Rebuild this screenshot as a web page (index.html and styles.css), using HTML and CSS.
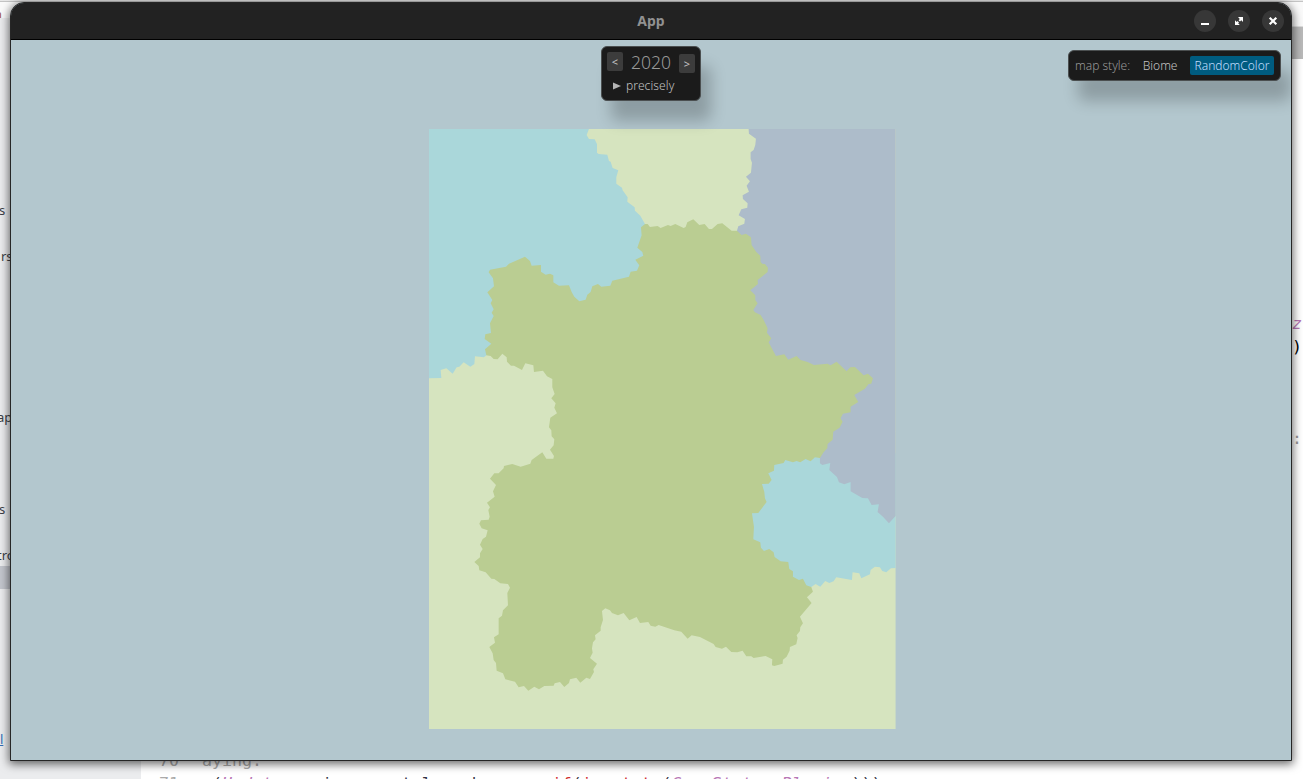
FILE: index.html
```html
<!DOCTYPE html>
<html lang="en">
<head>
<meta charset="utf-8">
<title>App</title>
<link rel="stylesheet" href="styles.css">
</head>
<body>
<div class="desktop">
  <div class="editor">
    <div class="editor-tabs"><span class="tab-label">n</span></div>
    <div class="editor-main">
      <ul class="tree">
        <li>s</li><li></li><li class="wide">rs</li><li></li><li></li><li></li><li></li><li></li><li></li>
        <li class="wide">ap</li><li></li><li></li><li></li><li>s</li><li></li><li class="wide">tro</li>
        <li class="selected"></li><li></li><li></li><li></li><li></li><li></li><li></li><li class="link">l</li>
      </ul>
      <div class="code-pane">
        <div class="code-header"></div>
        <div class="code-tail">
          <span class="type">z.</span><span>)</span><span></span><span></span><span></span><span class="muted">:</span>
        </div>
        <div class="code">
          <div class="line"><span class="num">70</span><code class="muted">aying:</code></div>
          <div class="line"><span class="num">71</span><code> (<i>Update</i>, uni::map_stels, ebon.<b>run_if</b>(<b>in_state</b>(<i>GameState</i>::<i>Playing</i>)))</code></div>
        </div>
      </div>
    </div>
  </div>

  <div class="window">
    <header class="titlebar">
      <span class="title">App</span>
      <div class="controls">
        <button class="control" aria-label="Minimize"><svg viewBox="0 0 22 22"><path d="M7 13h8v2H7z"/></svg></button>
        <button class="control" aria-label="Maximize"><svg viewBox="0 0 22 22"><path d="M10 7h5v5l-1.7-1.7-1.3 1.3-1.4-1.4 1.2-1.2zM7 10.2l1.7 1.7.8-.8 1.5 1.5-.8.8L11.800 15H7z"/></svg></button>
        <button class="control" aria-label="Close"><svg viewBox="0 0 22 22"><path class="cross" d="M7.7 7.7l6.6 6.6M14.3 7.7l-6.6 6.6"/></svg></button>
      </div>
    </header>
    <main class="stage">
      <svg class="map" viewBox="12 27 1400 1800" preserveAspectRatio="none">
        <rect class="plain" x="12" y="27" width="1400" height="1800"/>
        <path class="water" d="M12,27 492,27 485,45 492,57 509,58 516,72 516,98 521,102 547,104 552,123 557,125 563,144 580,151 574,172 574,191 591,203 593,211 608,232 607,245 629,262 630,272 646,287 660,312 660,600 220,700 184,706 177,712 150,709 148,732 136,740 116,727 103,740 95,742 83,761 64,745 47,750 49,774 12,775z"/>
        <path class="water" d="M1185,1000 1412,1000 1412,1344 1398,1345 1384,1357 1372,1353 1365,1342 1350,1340 1337,1350 1335,1363 1309,1375 1303,1360 1283,1357 1281,1380 1234,1372 1226,1384 1213,1389 1201,1383 1186,1400 1172,1392 1159,1401 950,1401 950,1000z"/>
        <path class="slate" d="M971,27 972,41 993,56 991,75 986,90 977,97 977,117 981,128 978,158 963,170 975,184 965,197 972,215 953,226 954,237 968,250 967,263 949,268 941,286 960,297 958,311 940,319 936,332 936,900 1180,1010 1185,1014 1185,1030 1192,1035 1216,1029 1213,1050 1236,1071 1242,1087 1258,1093 1277,1086 1277,1114 1312,1134 1329,1135 1340,1155 1362,1153 1358,1176 1374,1190 1392,1210 1412,1188 1412,27z"/>
        <path class="land" d="M660,312 668,312 675,321 698,318 707,324 729,315 737,318 751,312 776,324 782,321 787,307 805,298 823,315 839,312 852,327 861,327 878,312 892,310 920,332 936,332 950,345 963,341 978,352 980,375 994,396 1006,407 1007,426 1013,432 1020,432 1029,443 1028,456 998,480 999,492 976,511 991,526 991,540 998,550 985,570 990,577 1007,585 1016,600 1020,608 1028,625 1026,638 1039,655 1031,667 1053,708 1078,703 1090,719 1115,708 1127,720 1148,726 1167,735 1208,731 1217,736 1235,725 1265,754 1276,742 1290,741 1316,766 1329,761 1344,775 1339,791 1331,792 1320,806 1288,825 1300,846 1277,860 1277,877 1254,881 1247,895 1253,905 1244,923 1225,935 1223,959 1208,972 1207,985 1196,997 1185,1014 1170,1012 1157,1024 1142,1017 1126,1027 1115,1023 1104,1027 1081,1020 1076,1029 1048,1035 1047,1052 1030,1060 1040,1080 1031,1091 1011,1092 1018,1115 1020,1135 1025,1146 1000,1179 981,1180 987,1220 985,1258 1006,1267 1008,1283 1017,1293 1033,1287 1046,1297 1049,1311 1067,1324 1090,1326 1093,1347 1104,1354 1104,1370 1122,1380 1134,1376 1144,1396 1159,1401 1164,1415 1146,1432 1160,1449 1125,1490 1134,1510 1126,1522 1125,1533 1115,1546 1118,1554 1114,1573 1095,1581 1094,1592 1085,1610 1074,1619 1073,1631 1048,1638 1041,1636 1042,1618 1022,1608 986,1614 979,1609 964,1609 953,1592 937,1597 919,1596 903,1580 891,1586 872,1581 866,1572 825,1551 800,1546 788,1556 769,1535 748,1531 701,1515 691,1520 677,1517 670,1506 645,1509 635,1491 613,1501 596,1479 579,1486 561,1479 555,1471 541,1465 531,1473 534,1500 527,1522 527,1532 510,1546 512,1558 504,1567 501,1585 503,1598 495,1614 516,1631 505,1648 507,1656 495,1677 484,1673 466,1688 454,1673 435,1678 432,1689 418,1701 405,1686 389,1690 386,1697 358,1698 342,1708 328,1700 310,1712 297,1698 281,1702 270,1685 241,1678 234,1660 215,1652 213,1629 206,1620 203,1600 193,1581 210,1568 207,1552 221,1543 221,1495 231,1487 234,1471 249,1456 247,1419 255,1403 249,1392 226,1390 208,1377 199,1376 182,1357 163,1351 161,1338 148,1326 165,1312 165,1300 173,1287 165,1274 173,1257 183,1250 188,1231 170,1225 163,1211 168,1201 191,1199 194,1190 190,1170 195,1162 186,1148 209,1130 204,1114 213,1095 195,1076 208,1060 221,1060 236,1045 237,1038 262,1032 287,1040 316,1031 320,1020 352,997 364,1016 385,1016 387,1008 375,989 386,976 388,958 380,949 379,931 372,922 376,893 396,880 388,863 392,850 379,835 389,822 382,802 382,777 366,769 354,752 327,756 325,736 301,730 291,750 267,737 258,737 246,725 245,712 232,701 218,718 206,717 197,708 184,706 180,688 199,671 179,657 181,643 198,639 195,610 206,588 200,578 206,568 197,550 202,540 187,517 207,499 204,475 191,457 195,449 243,440 252,431 300,410 315,423 320,437 348,435 348,455 362,464 375,461 385,466 385,487 402,497 432,496 440,516 448,530 463,544 482,539 487,524 497,516 502,499 519,492 529,500 556,497 562,482 612,470 617,455 636,452 643,436 631,419 655,407 652,396 637,383 650,346 648,322z"/>
      </svg>
      <section class="panel date-panel">
        <div class="year-row">
          <button class="step">&lt;</button>
          <span class="year">2020</span>
          <button class="step next">&gt;</button>
        </div>
        <div class="precise-row">
          <svg class="arrow" viewBox="0 0 8 8"><path d="M0 0.5L8 4L0 7.5z"/></svg>
          <span class="precise">precisely</span>
        </div>
      </section>
      <section class="panel style-panel">
        <span class="style-label">map style:</span>
        <span class="style-option">Biome</span>
        <span class="style-option active">RandomColor</span>
      </section>
    </main>
  </div>
</div>
</body>
</html>
```

FILE: styles.css
```css
* { box-sizing: border-box; }
body { margin: 0; font-family: "Noto Sans", "Open Sans", sans-serif; }
.desktop { position: relative; width: 1303px; height: 779px; overflow: hidden; background: #fff; }

.editor { display: flex; flex-direction: column; height: 779px; }
.editor-tabs { height: 18px; flex: none; border-top: 1px solid #e8e8e8; box-shadow: inset 0 1px #c4c4c4; background: #fafafa; overflow: hidden; }
.tab-label { display: block; margin-left: -6px; font-size: 13px; line-height: 26px; color: #a55a50; }
.editor-main { display: flex; flex: 1; min-height: 0; }
.tree { width: 141px; margin: 0; padding: 180px 0 0; list-style: none; background: #ebecee; font-size: 13px; color: #3c3f46; }
.tree li { height: 23px; line-height: 24px; text-indent: -1px; }
.tree .wide { text-indent: -3px; }
.tree li:nth-child(3) { text-indent: 1px; }
.tree .selected { background: #c3c6cd; }
.tree .link { color: #2f6fb8; text-decoration: underline; text-indent: 0; }
.code-pane { flex: 1; display: flex; flex-direction: column; overflow: hidden; font-family: "DejaVu Sans Mono", monospace; font-size: 16.6px; }
.code-header { height: 41px; flex: none; background: linear-gradient(#fafafa 8px, #ddd 8px, #ddd 9px, #b9b9b9 9px); }
.code-tail { display: grid; grid-auto-rows: 23px; justify-content: end; grid-template-columns: 11px; margin-top: 253px; line-height: 23px; }
.type { font-style: italic; color: #b877b5; }
.muted { color: #999; }
.code { margin-top: auto; margin-bottom: -16px; }
.line { display: flex; height: 23px; line-height: 23px; }
.num { width: 61px; padding-left: 18px; color: #aaa; }
code { flex: 1; font: inherit; line-height: 23px; white-space: pre; overflow: hidden; color: #334; }
code.muted { color: #aaa; }
code i { color: #b877b5; }
code b { color: #d03030; font-weight: normal; }

.window { position: absolute; left: 10px; top: 2px; width: 1282px; height: 759px; display: flex; flex-direction: column; overflow: hidden; border: 1px solid #262626; border-radius: 14px 14px 0 0; background: #b3c7ce; box-shadow: 0 2px 10px 1px rgba(0,0,0,.6); }
.titlebar { display: grid; grid-template-columns: 1fr auto 1fr; align-items: center; height: 37px; flex: none; padding-right: 7px; background: #222; border-bottom: 1px solid #000; }
.title { grid-column: 2; padding: 0 0 2px 7px; font-size: 14px; font-weight: 700; color: #919191; }
.controls { display: flex; justify-content: flex-end; gap: 12px; }
.control { width: 22px; height: 22px; padding: 0; border: 0; border-radius: 50%; background: #373737; }
.control svg { display: block; width: 22px; height: 22px; fill: #fff; }
.cross { stroke: #fff; stroke-width: 2.2; }

.stage { position: relative; flex: 1; display: flex; justify-content: flex-start; padding: 89px 0 31px 418px; }
.map { display: block; width: 466.6px; height: 600px; }
.plain { fill: #d6e4bf; }
.water { fill: #aad7da; }
.slate { fill: #adbcca; }
.land { fill: #bacd92; }

.panel { position: absolute; border: 1px solid #4b4f50; border-radius: 6px; background: #1b1b1b; box-shadow: 10px 20px 15px rgba(0,0,0,.21); font-size: 12px; font-weight: 300; color: #c4c4c4; }
.date-panel { left: 590px; top: 6px; width: 100px; height: 55px; padding: 5px; }
.year-row { display: flex; justify-content: space-between; height: 22px; }
.step { width: 16px; height: 19px; padding: 0; border: 0; border-radius: 2px; background: #3c3c3c; color: #c4c4c4; font: 400 11px/19px "Noto Sans", sans-serif; }
.next { margin-top: 2px; }
.year { font-size: 17.5px; line-height: 21px; color: #999; }
.precise-row { display: flex; align-items: center; gap: 5px; height: 23px; padding-left: 6px; }
.arrow { width: 8px; height: 8px; fill: #b4b4b4; }
.precise { letter-spacing: .1px; }
.style-panel { right: 10px; top: 10px; width: 213px; height: 31px; display: flex; align-items: center; justify-content: space-between; padding: 0 6px; }
.style-label { color: #999; }
.style-option { margin-left: 4px; }
.style-option.active { width: 84px; height: 19px; line-height: 19px; margin-left: 4px; border-radius: 2px; text-align: center; background: #005c80; color: #c0deff; }
```
